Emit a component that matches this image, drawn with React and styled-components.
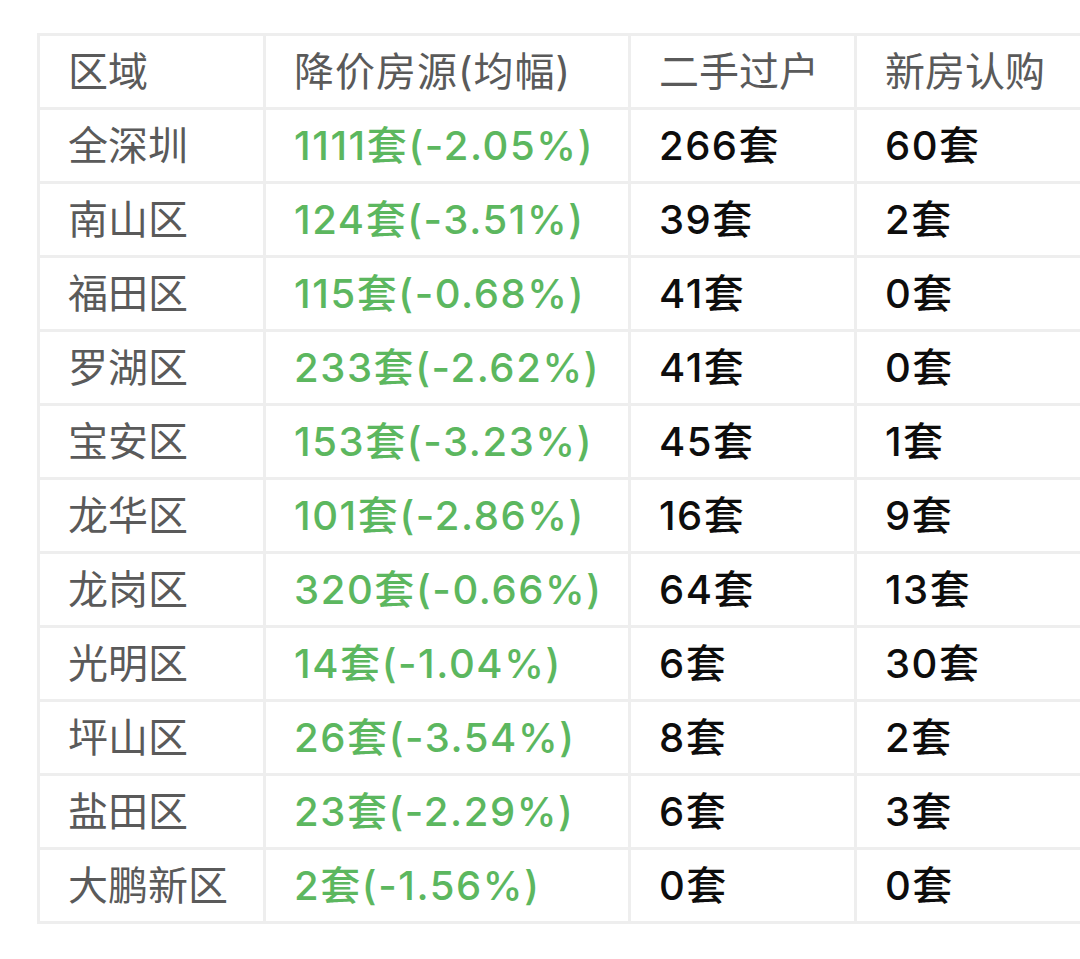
import React from "react";
import styled, { createGlobalStyle } from "styled-components";

const Global = createGlobalStyle`
  html, body { margin: 0; padding: 0; background: #ffffff; overflow: hidden; }
  * { box-sizing: border-box; }
`;

const Page = styled.div`
  width: 1080px;
  height: 959px;
  overflow: hidden;
  padding: 33px 0 0 37px;
  background: #fff;
  font-family: Inter, "Noto Sans CJK SC", sans-serif;
`;

const Table = styled.table`
  border-collapse: separate;
  border-spacing: 0;
  table-layout: fixed;
  width: 1046px;
  border-top: 3px solid #eeeeee;
  border-left: 3px solid #eeeeee;
`;

const tones = {
  gray: { color: "#5a5a5a", weight: 400, spacing: "0px" },
  green: { color: "#5cb75f", weight: 500, spacing: "1.6px" },
  black: { color: "#0d0d0d", weight: 500, spacing: "1.5px" },
};

const Cell = styled.td`
  height: 74px;
  padding: 0 0 0 28px;
  border-right: 3px solid #eeeeee;
  border-bottom: 3px solid #eeeeee;
  font-size: 40px;
  line-height: 1;
  white-space: nowrap;
  vertical-align: middle;
  font-weight: ${(p) => tones[p.$tone].weight};
  color: ${(p) => tones[p.$tone].color};
  letter-spacing: ${(p) => tones[p.$tone].spacing};
`;

const HeadCell = styled(Cell).attrs({ as: "th" })`
  text-align: left;
  letter-spacing: ${(p) => (p.$wide ? "1px" : "0px")};
`;

const rows = [
  ["全深圳", "1111套(-2.05%)", "266套", "60套"],
  ["南山区", "124套(-3.51%)", "39套", "2套"],
  ["福田区", "115套(-0.68%)", "41套", "0套"],
  ["罗湖区", "233套(-2.62%)", "41套", "0套"],
  ["宝安区", "153套(-3.23%)", "45套", "1套"],
  ["龙华区", "101套(-2.86%)", "16套", "9套"],
  ["龙岗区", "320套(-0.66%)", "64套", "13套"],
  ["光明区", "14套(-1.04%)", "6套", "30套"],
  ["坪山区", "26套(-3.54%)", "8套", "2套"],
  ["盐田区", "23套(-2.29%)", "6套", "3套"],
  ["大鹏新区", "2套(-1.56%)", "0套", "0套"],
];

export default function App() {
  return (
    <Page>
      <Global />
      <Table>
        <colgroup>
          <col style={{ width: 226 }} />
          <col style={{ width: 365 }} />
          <col style={{ width: 226 }} />
          <col style={{ width: 226 }} />
        </colgroup>
        <thead>
          <tr>
            <HeadCell $tone="gray">区域</HeadCell>
            <HeadCell $tone="gray" $wide>降价房源(均幅)</HeadCell>
            <HeadCell $tone="gray">二手过户</HeadCell>
            <HeadCell $tone="gray">新房认购</HeadCell>
          </tr>
        </thead>
        <tbody>
          {rows.map((r) => (
            <tr key={r[0]}>
              <Cell $tone="gray">{r[0]}</Cell>
              <Cell $tone="green">{r[1]}</Cell>
              <Cell $tone="black">{r[2]}</Cell>
              <Cell $tone="black">{r[3]}</Cell>
            </tr>
          ))}
        </tbody>
      </Table>
    </Page>
  );
}
